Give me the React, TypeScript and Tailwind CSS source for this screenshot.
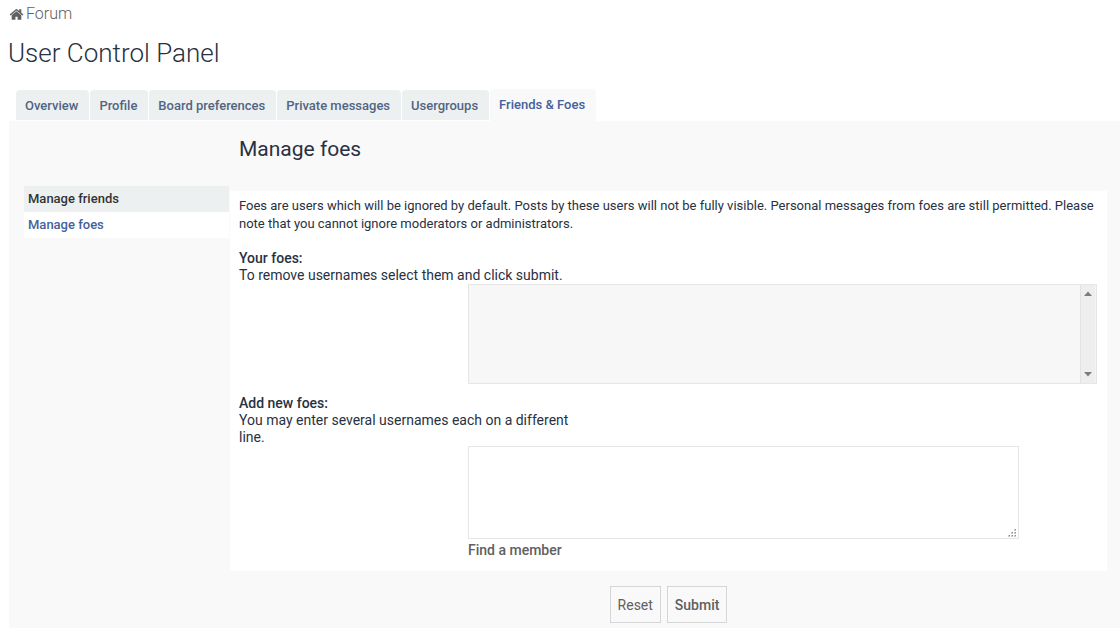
import React from 'react';

const tabs = [
  'Overview',
  'Profile',
  'Board preferences',
  'Private messages',
  'Usergroups',
  'Friends & Foes',
];

const activeTab = 'Friends & Foes';

const menu = ['Manage friends', 'Manage foes'];
const activeMenu = 'Manage foes';

const HomeIcon = () => (
  <svg viewBox="0 0 1792 1792" className="size-[15px]" fill="currentColor" aria-hidden="true">
    <path d="M1472 992v480q0 26-19 45t-45 19h-384v-384h-256v384h-384q-26 0-45-19t-19-45v-480q0-1 .5-3t.5-3l575-474 575 474q1 2 1 6zm223-69l-62 74q-8 9-21 11h-3q-13 0-21-7l-692-577-692 577q-12 8-24 7-13-2-21-11l-62-74q-8-10-7-23.5t11-21.5l719-599q32-26 76-26t76 26l244 204v-195q0-14 9-23t23-9h192q14 0 23 9t9 23v408l219 182q10 8 11 21.5t-7 23.5z" />
  </svg>
);

const Tabs = () => (
  <nav className="flex items-end gap-px pl-2">
    {tabs.map((tab) => (
      <a
        key={tab}
        href="#"
        className={`rounded-t pr-[11px] pl-[9px] text-[13px] font-medium ${
          tab === activeTab
            ? 'h-8 bg-[#f9f9f9] leading-[31px] text-[#45619b]'
            : 'mb-px h-[30px] bg-[#ecf0f1] leading-[31px] text-[#536482]'
        }`}
      >
        {tab}
      </a>
    ))}
  </nav>
);

const Sidebar = () => (
  <aside className="w-[205px] shrink-0 pt-[65px]">
    {menu.map((item) => (
      <a
        key={item}
        href="#"
        className={`block h-[26px] px-1 text-[13px] leading-[26px] font-medium ${
          item === activeMenu ? 'bg-white text-[#45619b]' : 'bg-[#ecf0f1] text-[#333333]'
        }`}
      >
        {item}
      </a>
    ))}
  </aside>
);

// List box with its own scroll track on the right
const FoesList = () => (
  <div className="flex h-[100px] border border-[#e6e6e6] bg-[#f7f7f7]">
    <select
      id="foes"
      multiple
      className="h-full min-w-0 flex-1 appearance-none overflow-hidden bg-[#f7f7f7] outline-none"
    />
    <div
      aria-hidden="true"
      className="flex w-4 flex-col items-center justify-between border-x border-l-[#e2e2e2] border-r-[#f4f4f4] bg-[#eeeeee] py-[6px]"
    >
      <svg viewBox="0 0 8 5" className="h-[5px] w-2" fill="#7c7c7c">
        <path d="M0 5 L4 0.5 L8 5 Z" />
      </svg>
      <svg viewBox="0 0 8 5" className="h-[5px] w-2" fill="#7c7c7c">
        <path d="M0 0 L4 4.5 L8 0 Z" />
      </svg>
    </div>
  </div>
);

const ResizeGrip = () => (
  <svg
    viewBox="0 0 9 9"
    className="pointer-events-none absolute right-[3px] bottom-[2px] size-[9px]"
    shapeRendering="crispEdges"
    aria-hidden="true"
  >
    <path
      fill="#cccccc"
      d="M7 1h2v2h-2zM4 4h2v2h-2zM7 4h2v2h-2zM1 7h2v2h-2zM4 7h2v2h-2zM7 7h2v2h-2z"
    />
    <path
      fill="#8c8c8c"
      d="M8 1h1v1h-1zM5 4h1v1h-1zM8 4h1v1h-1zM2 7h1v1h-1zM5 7h1v1h-1zM8 7h1v1h-1z"
    />
  </svg>
);

export default function App() {
  return (
    <div className="min-h-screen bg-white pl-2 font-['Roboto',sans-serif] text-[#28313f]">
      <header>
        <a href="#" className="flex h-7 items-center gap-[2px] pl-px text-base font-light text-[#606060]">
          <HomeIcon />
          <span>Forum</span>
        </a>
        <h1 className="pt-2 pb-[19px] text-[26px] leading-[34px] font-light">User Control Panel</h1>
      </header>

      <Tabs />

      <div className="ml-px flex bg-[#f9f9f9] pl-[15px]">
        <Sidebar />

        <main className="ml-px min-w-0 flex-1 pr-[13px] pb-[5px]">
          <h2 className="px-[9px] pt-[15px] pb-[29px] text-[21px] leading-[26px]">Manage foes</h2>

          <form>
            <div className="bg-white pt-[6px] pr-[10px] pb-[12px] pl-[9px]">
              <p className="text-[13px] leading-[18px]">
                Foes are users which will be ignored by default. Posts by these users will not be fully visible.
                Personal messages from foes are still permitted. Please note that you cannot ignore moderators or
                administrators.
              </p>

              <div className="mt-[17px] text-sm leading-[17px]">
                <label htmlFor="foes" className="block font-medium">Your foes:</label>
                <p>To remove usernames select them and click submit.</p>
                <div className="ml-[229px]">
                  <FoesList />
                </div>
              </div>

              <div className="mt-[11px] text-sm leading-[17px]">
                <label htmlFor="usernames" className="block font-medium">Add new foes:</label>
                <p className="max-w-[340px]">You may enter several usernames each on a different line.</p>
                <div className="ml-[229px]">
                  <div className="relative mr-[78px]">
                    <textarea
                      id="usernames"
                      className="block h-[93px] w-full resize-none border border-[#e6e6e6] bg-white p-1 outline-none"
                    />
                    <ResizeGrip />
                  </div>
                  <a href="#" className="mt-[3px] block font-medium text-[#606060]">Find a member</a>
                </div>
              </div>
            </div>

            <div className="flex justify-center gap-[6px] pt-[15px]">
              <button
                type="reset"
                className="h-[37px] border border-[#d6d6d6] bg-[#f9f9f9] px-[7px] text-sm text-[#606060]"
              >
                Reset
              </button>
              <button
                type="submit"
                className="h-[37px] border border-[#d6d6d6] bg-[#f9f9f9] px-[7px] text-sm font-medium text-[#606060]"
              >
                Submit
              </button>
            </div>
          </form>
        </main>
      </div>
    </div>
  );
}
